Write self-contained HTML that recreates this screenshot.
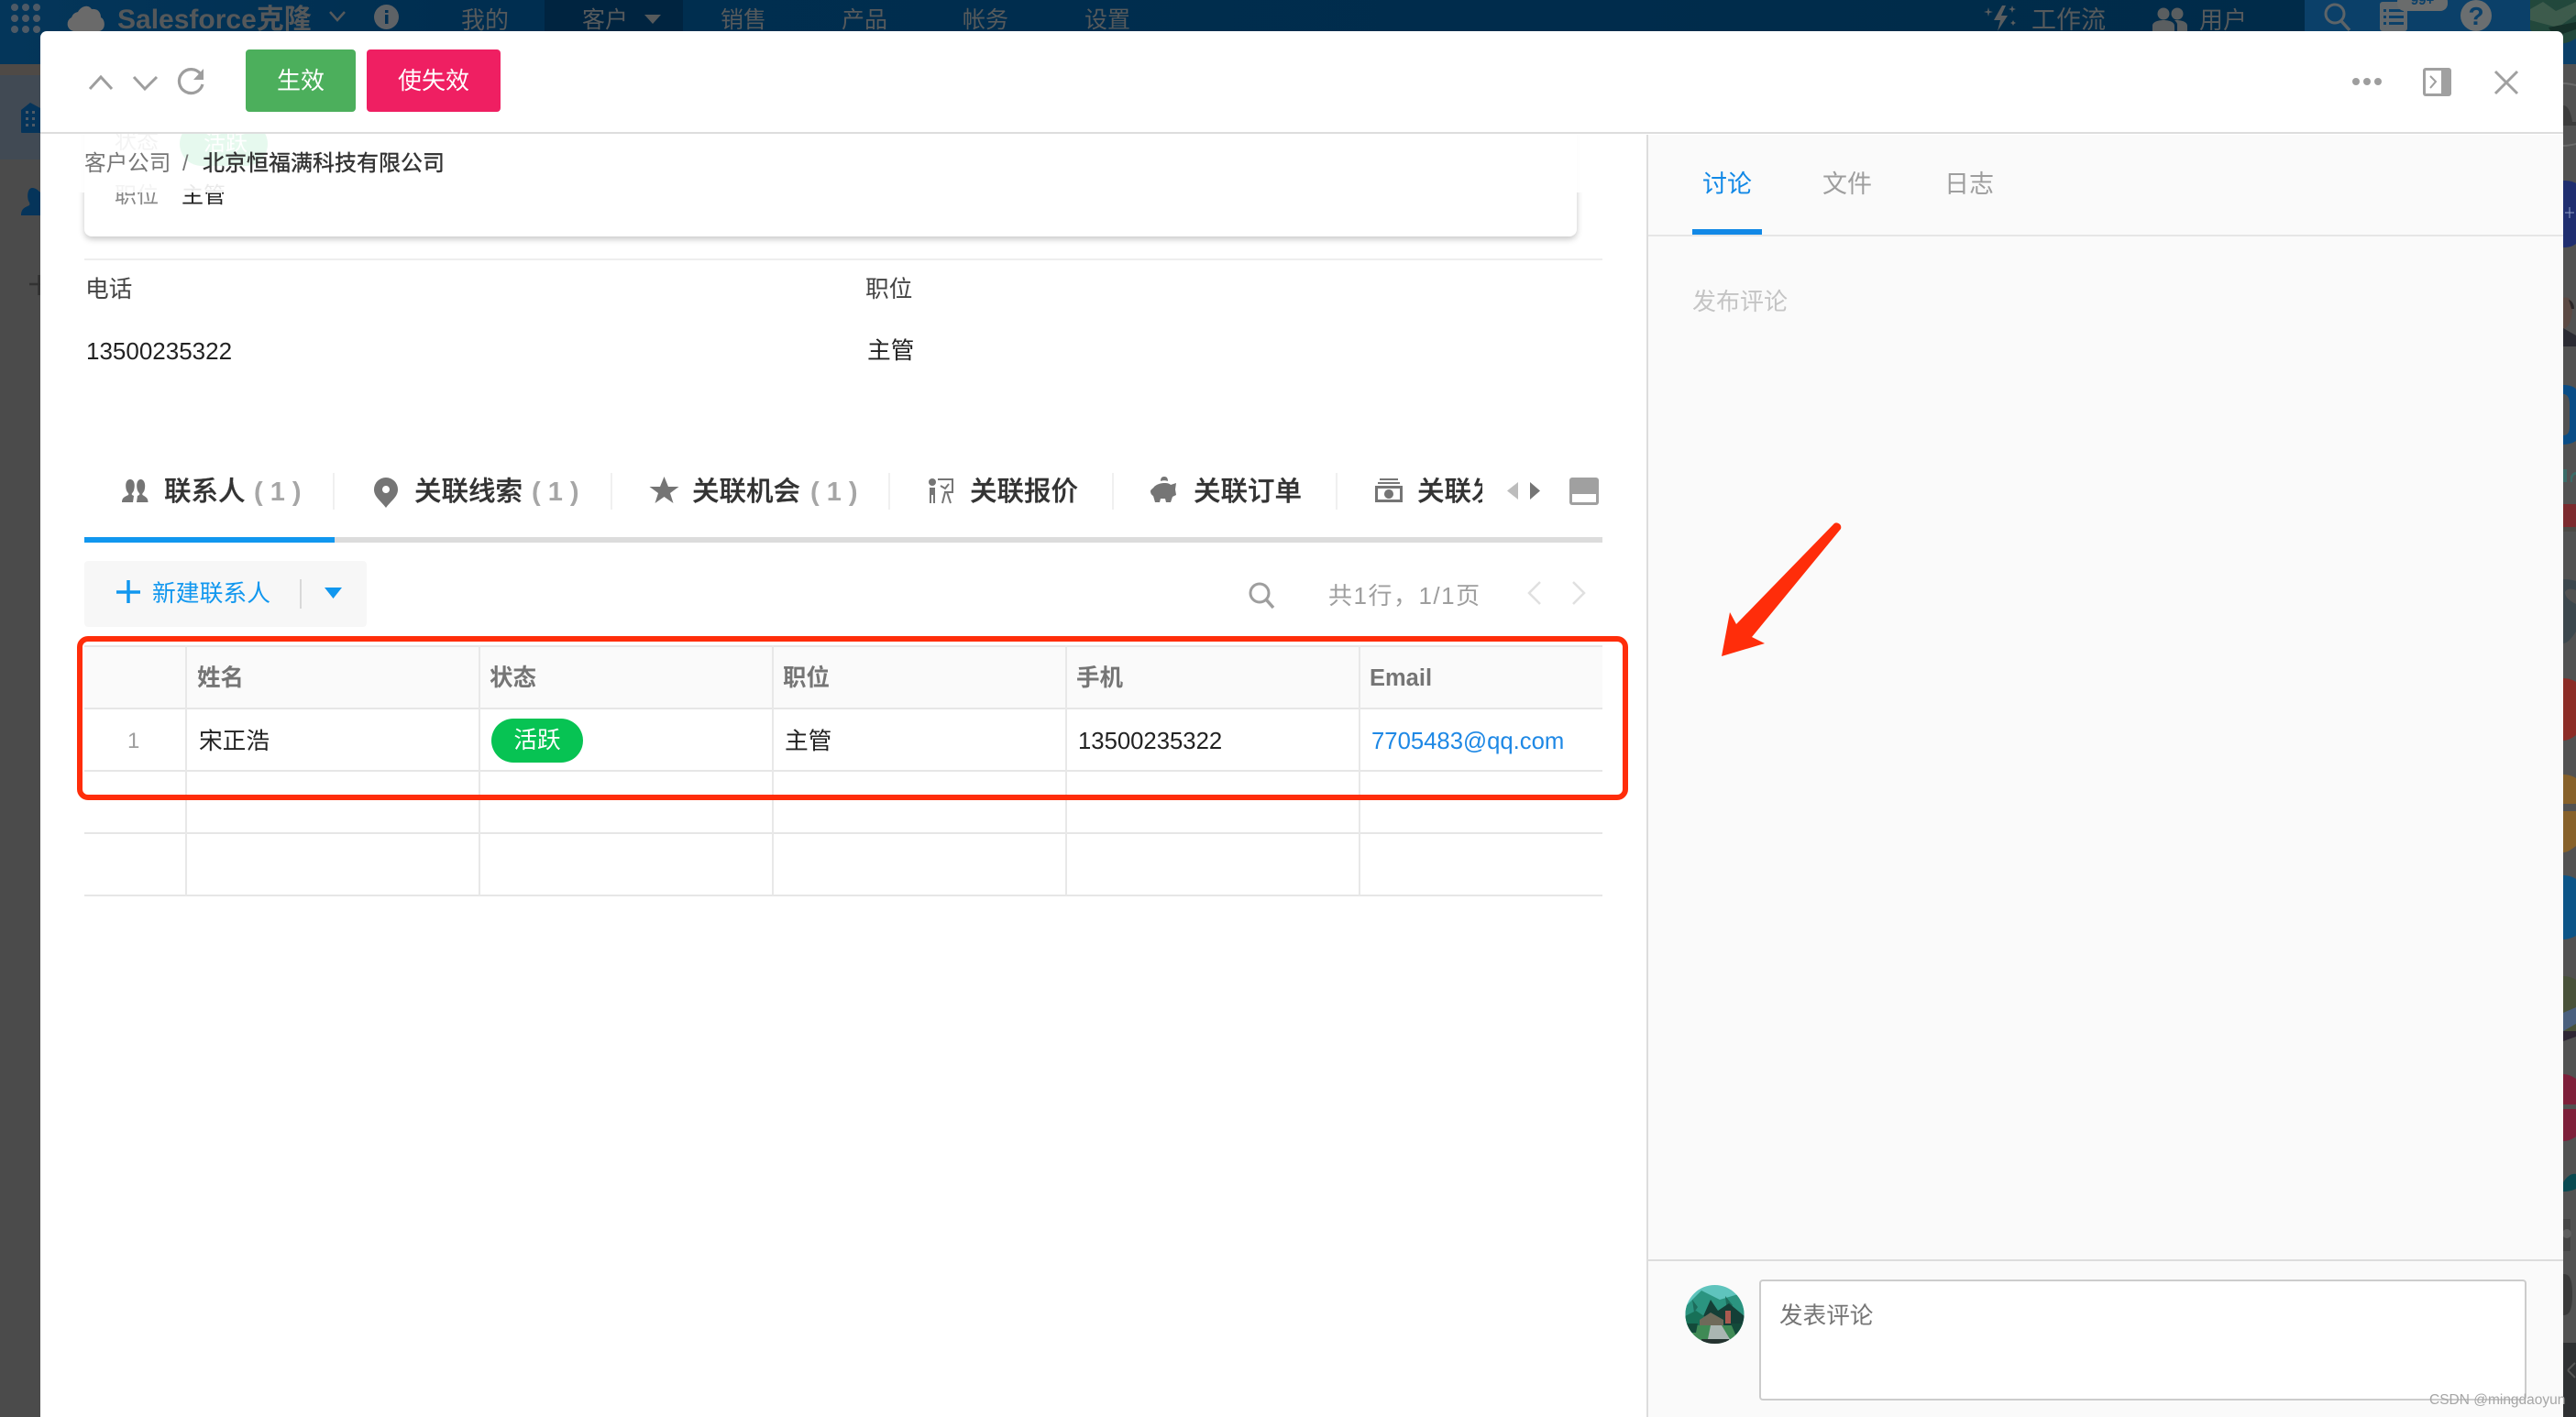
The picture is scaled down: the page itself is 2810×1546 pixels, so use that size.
<!DOCTYPE html>
<html lang="zh-CN"><head><meta charset="utf-8"><title>Salesforce克隆</title>
<style>
html,body{margin:0;padding:0;width:2810px;height:1546px;overflow:hidden;background:#4b4b4b}
body{position:relative;font-family:"Liberation Sans","Noto Sans CJK SC",sans-serif;color:#333}
.a{position:absolute}
.t{position:absolute;white-space:nowrap;line-height:40px;height:40px;transform:translateY(2px)}
svg{position:absolute;overflow:visible}
.nav{font-size:29px;color:#565a5c}
.tab{font-size:29.500px;font-weight:500;color:#333;-webkit-text-stroke:.3px #333}
.cnt{font-size:29px;color:#a6a6a6;font-weight:700}
.th{font-size:25.500px;font-weight:700;color:#757575}
.td{font-size:25.700px;color:#222}
.hl{position:absolute;left:92px;width:1656px;height:2px;background:#e6e6e6}
.vl{position:absolute;top:704px;width:2px;height:274px;background:#e8e8e8}
.sep{position:absolute;top:516px;width:2px;height:40px;background:#f0f0f0}
</style></head><body>

<!-- dimmed page background -->
<div class="a" style="left:0;top:0;width:2810px;height:70px;background:linear-gradient(90deg,#04365a 0,#002e50 500px,#002b49 2514px,#0b4069 2514px,#0b4069 2810px)"></div>
<div class="a" style="left:594px;top:0;width:151px;height:70px;background:#002440"></div>
<div class="a" style="left:0;top:70px;width:44px;height:12px;background:#4f4a46"></div>
<div class="a" style="left:0;top:82px;width:44px;height:92px;background:#414a54"></div>

<svg style="left:0;top:0" width="60" height="340" viewBox="0 0 60 340">
<g fill="#4e5a66"><circle cx="16" cy="8" r="4"/><circle cx="28" cy="8" r="4"/><circle cx="40" cy="8" r="4"/><circle cx="16" cy="20" r="4"/><circle cx="28" cy="20" r="4"/><circle cx="40" cy="20" r="4"/><circle cx="16" cy="32" r="4"/><circle cx="28" cy="32" r="4"/><circle cx="40" cy="32" r="4"/></g>
<path d="M24 145a1 1 0 0 1-1-1v-24l10-8 11 6v27z" fill="#05345a"/>
<g fill="#4e5a66"><rect x="28" y="121" width="3" height="3"/><rect x="35" y="121" width="3" height="3"/><rect x="28" y="128" width="3" height="3"/><rect x="35" y="128" width="3" height="3"/><rect x="28" y="135" width="3" height="3"/><rect x="35" y="135" width="3" height="3"/></g>
<path d="M23 235c0-8 5-9 9-11 1-2 0-3-1-5-2-7 0-14 4-14s7 3 9 5v25z" fill="#05345a"/>
<path d="M32 310h12M42.500 300v22" stroke="#333" stroke-width="2.500" fill="none"/>
</svg>

<svg style="left:72px;top:5px" width="44" height="30" viewBox="0 0 44 30"><path d="M8 29a8 8 0 0 1-2-15 9 9 0 0 1 7-6c3-6 11-9 15-3 7-1 10 4 10 9 5 2 6 14-2 15z" fill="#6a6a6a"/></svg>
<div class="t nav" style="left:128px;top:0;font-weight:700;font-size:30px;color:#55585a">Salesforce克隆</div>
<svg style="left:359px;top:11px" width="18" height="14" viewBox="0 0 18 14"><path d="M1 2l8 9 8-9" stroke="#565a5c" stroke-width="2.500" fill="none"/></svg>
<svg style="left:408px;top:5px" width="27" height="27" viewBox="0 0 27 27"><circle cx="13.500" cy="13.500" r="13.500" fill="#5e6266"/><rect x="12" y="11" width="3.500" height="10" fill="#013052"/><rect x="12" y="6" width="3.500" height="3" fill="#013052"/></svg>
<div class="t nav" style="left:503px;top:0;font-size:26px">我的</div>
<div class="t nav" style="left:635px;top:0;font-size:25px">客户</div>
<svg style="left:703px;top:16px" width="18" height="10" viewBox="0 0 18 10"><path d="M0 0h18l-9 10z" fill="#565a5c"/></svg>
<div class="t nav" style="left:786px;top:0;font-size:25px">销售</div>
<div class="t nav" style="left:918px;top:0;font-size:25px">产品</div>
<div class="t nav" style="left:1050px;top:0;font-size:25px">帐务</div>
<div class="t nav" style="left:1183px;top:0;font-size:25px">设置</div>

<svg style="left:2165px;top:4px" width="36" height="30" viewBox="0 0 36 30"><path d="M19 2L10 18h7l-3 12 11-17h-7l5-11z" fill="#5a5e60"/><path d="M4 4l1 4 4 1-4 1-1 4-1-4-4-1 4-1z M30 2l1 3 3 1-3 1-1 3-1-3-3-1 3-1z M31 18l1 2 2 1-2 1-1 2-1-2-2-1 2-1z" fill="#5a5e60"/></svg>
<div class="t nav" style="left:2216px;top:0;font-size:27px">工作流</div>
<svg style="left:2348px;top:8px" width="38" height="26" viewBox="0 0 38 26"><circle cx="12" cy="7" r="6.500" fill="#5a5e60"/><circle cx="27" cy="7" r="6.500" fill="#5a5e60"/><path d="M0 26v-6c0-4 6-6 12-6s12 2 12 6v6zM26 14c6 0 12 2 12 6v6H27v-7c0-2-1-3-3-5z" fill="#5a5e60"/></svg>
<div class="t nav" style="left:2399px;top:0;font-size:26px">用户</div>
<svg style="left:2534px;top:2px" width="32" height="32" viewBox="0 0 32 32"><circle cx="13" cy="13" r="10" stroke="#5d6468" stroke-width="3" fill="none"/><path d="M20 21l9 10" stroke="#5d6468" stroke-width="3.500"/></svg>
<svg style="left:2596px;top:2px" width="30" height="32" viewBox="0 0 30 32"><rect width="30" height="32" rx="3" fill="#62686c"/><g fill="#0b4069"><rect x="4" y="8" width="3" height="3"/><rect x="10" y="8" width="16" height="3"/><rect x="4" y="15" width="3" height="3"/><rect x="10" y="15" width="16" height="3"/><rect x="4" y="22" width="3" height="3"/><rect x="10" y="22" width="16" height="3"/></g></svg>
<div class="a" style="left:2615px;top:-6px;width:55px;height:18px;border-radius:8px;background:#6a6c6c;color:#0b4069;font-size:15px;text-align:center;line-height:14px;font-weight:700">99+</div>
<svg style="left:2684px;top:2px" width="34" height="32" viewBox="0 0 34 32"><circle cx="17" cy="15" r="17" fill="#6a6e70"/><text x="17" y="25" text-anchor="middle" font-family="Liberation Sans" font-weight="700" font-size="28" fill="#0b4069">?</text></svg>

<!-- right strip -->
<svg style="left:2760px;top:0" width="50" height="1546" viewBox="0 0 50 1546">
<rect x="36" y="70" width="14" height="1476" fill="#525252"/>
<defs><clipPath id="av"><circle cx="30" cy="12" r="36"/></clipPath></defs>
<g clip-path="url(#av)"><rect width="50" height="50" fill="#22483c"/><path d="M0 10l14-8 14 10 22-10v14L30 30 0 22z" fill="#3d5b4c"/><path d="M20 30l30-6v8l-24 8z" fill="#153029"/></g>
<rect x="36" y="50" width="14" height="20" fill="#0b4069"/>
<path d="M36 90c4 0 10 1 14 2v2c-5-1-10-2-14-2zM36 158c5 0 10-1 14-2v2c-5 1-10 2-14 2z" fill="#6a6a6a"/>
<path d="M36 115c6 0 9 10 10 18h4v4H36z" fill="#3c3c3c"/>
<path d="M36 197c6 0 11 1 14 3v66c-4 3-8 4-14 4z" fill="#1f2e70"/>
<path d="M38 232h10M43 226v12" stroke="#8f9fc4" stroke-width="1"/>
<path d="M36 325c6-2 10 2 10 10 0 10-2 22-10 24z" fill="#5c4a44"/><path d="M36 358l14 8v12H36z" fill="#2b2b33"/><path d="M42 327c3 1 6 4 6 10h-3c-1-4-2-7-3-10z" fill="#2a2628"/>
<path d="M36 420c8 0 14 3 14 5v56c-3 2-8 4-14 4v-10c5 0 7-3 7-10v-24c0-8-3-11-7-11z" fill="#0a4d86"/>
<path d="M36 512h4v14h-4zM44 520c2-4 4-5 6-5v3c-3 0-4 3-4 8h-2z" fill="#3a6c68"/>
<rect x="36" y="550" width="14" height="25" fill="#7c2a2e"/><rect x="36" y="575" width="14" height="5" fill="#4d4a46"/>
<path d="M36 632c6 0 11 1 14 2v10c-5-2-10-2-12 2 0 6 6 10 12 13v30c-5 8-10 13-14 13z" fill="#3c474d"/><path d="M36 660c6 4 10 8 14 9v12c-5 5-10 8-14 10z" fill="#3c474d"/>
<path d="M36 740c6 0 11 2 14 4v58c-4 3-9 6-14 6z" fill="#8c2c26"/>
<path d="M36 845c6 0 11 2 14 4v28H36zM36 885h14v38c-4 3-9 7-14 7z" fill="#87612a"/>
<path d="M36 955c6 0 11 2 14 4v62c-4 2-9 4-14 4z" fill="#0c5588"/>
<path d="M36 1065c6 0 11 2 14 4v60c-4 3-9 6-14 6z" fill="#49523a"/><path d="M36 1105l14-6v18l-14 8z" fill="#4a607e"/><path d="M36 1125h14v6l-14 5z" fill="#2e2634"/>
<path d="M36 1172c6 0 11 3 14 5v28H36zM36 1210h14v30c-4 3-9 5-14 5z" fill="#7e1f3a"/>
<path d="M36 1290c5-8 10-10 14-9v16c-4 2-9 3-14 3z" fill="#0a4a52"/>
<rect x="36" y="1330" width="8" height="35" fill="#454545"/><circle cx="40" cy="1346" r="5" fill="#5e5e5e"/>
<path d="M36 1390c6 0 10 3 10 22s-4 23-10 23z" fill="#3a3a3a"/>
<rect x="36" y="1465" width="14" height="81" fill="#2f3133"/>
<path d="M41 1495l8-8M41 1495l8 8" stroke="#555" stroke-width="2" fill="none"/>
</svg>

<!-- modal -->
<div class="a" style="left:44px;top:34px;width:2752px;height:1512px;background:#fff;border-radius:7px 7px 0 0;overflow:hidden"></div>
<div class="a" style="left:1796px;top:147px;width:1000px;height:1399px;background:#fafafa;border-left:2px solid #ddd;box-sizing:border-box"></div>

<!-- card scrolled behind breadcrumb (clipped at the header line) -->
<div class="a" style="left:80px;top:146px;width:1660px;height:130px;overflow:hidden">
  <div class="a" style="left:12px;top:-46px;width:1628px;height:158px;background:#fff;border-radius:8px;box-shadow:0 3px 7px rgba(0,0,0,.22)"></div>
  <div class="t" style="left:45px;top:-13px;font-size:24px;color:#888">状态</div>
  <div class="a" style="left:116px;top:-13px;width:96px;height:48px;border-radius:24px;background:#07c353"></div>
  <div class="t" style="left:142px;top:-11px;font-size:24px;color:#fff">活跃</div>
  <div class="t" style="left:45px;top:46px;font-size:24px;color:#888">职位</div>
  <div class="t" style="left:118px;top:46px;font-size:24px;color:#222">主管</div>
</div>
<div class="a" style="left:44px;top:146px;width:1752px;height:64px;background:rgba(255,255,255,.9)"></div>
<div class="a" style="left:44px;top:144px;width:2752px;height:2px;background:#ddd"></div>

<!-- header -->
<svg style="left:44px;top:34px" width="240" height="90" viewBox="44 34 240 90">
<path d="M98 97l12-13 12 13M146 84l12 13 13-13" stroke="#9e9e9e" stroke-width="3" fill="none"/>
<path d="M219 81a13 13 0 1 0 2 11" stroke="#9e9e9e" stroke-width="3.200" fill="none"/>
<path d="M222 75v12h-11z" fill="#9e9e9e"/>
</svg>
<div class="a" style="left:268px;top:54px;width:120px;height:68px;background:#4caf5c;border-radius:4px;color:#fff;font-size:26px;text-align:center;line-height:68px">生效</div>
<div class="a" style="left:400px;top:54px;width:146px;height:68px;background:#ef1f62;border-radius:4px;color:#fff;font-size:26px;text-align:center;line-height:68px">使失效</div>

<svg style="left:2560px;top:70px" width="200" height="40" viewBox="2560 70 200 40">
<circle cx="2570" cy="89" r="4" fill="#9e9e9e"/><circle cx="2582" cy="89" r="4" fill="#9e9e9e"/><circle cx="2594" cy="89" r="4" fill="#9e9e9e"/>
<rect x="2643" y="74" width="31" height="31" rx="3" fill="#a0a0a0"/><rect x="2646" y="77" width="17" height="25" fill="#fff"/><path d="M2651 83l6 6-6 7" stroke="#9e9e9e" stroke-width="2" fill="none"/>
<path d="M2722 78l24 24M2746 78l-24 24" stroke="#a0a0a0" stroke-width="3" fill="none"/>
</svg>

<!-- breadcrumb -->
<div class="t" style="left:92px;top:157px;font-size:23.600px;color:#757575">客户公司</div>
<div class="t" style="left:199px;top:157px;font-size:23.600px;color:#757575">/</div>
<div class="t" style="left:221px;top:157px;font-size:24px;color:#333;-webkit-text-stroke:.4px #333">北京恒福满科技有限公司</div>

<div class="a" style="left:92px;top:282px;width:1656px;height:2px;background:#eee"></div>
<div class="t td" style="left:93px;top:294px;color:#444">电话</div>
<div class="t td" style="left:944px;top:294px;color:#444">职位</div>
<div class="t td" style="left:94px;top:361px;font-size:26px">13500235322</div>
<div class="t td" style="left:946px;top:361px">主管</div>

<!-- related tabs -->
<svg style="left:130px;top:516px" width="1620" height="40" viewBox="130 516 1620 40">
<g fill="#757575">
<path d="M133 548c0-5 3-6 7-8 1-2-1-2-2-5-2-7 0-12 4-12s6 5 4 12c-1 3-3 3-2 5l2 1-1 7z"/>
<path d="M149 548l1-7 2-1c1-2-1-2-2-5-2-7 0-12 3.500-12s6 5 4 12c-1 3-3 3-2 5 3 2 6 3 6 8z"/>
<path fill-rule="evenodd" d="M421 521a13 13 0 0 1 13 13c0 8-7 12-13 20-6-8-13-12-13-20a13 13 0 0 1 13-13zm0 9a4 4 0 1 0 .01 0z"/>
<path d="M724.500 520l4.500 11h11.500l-9.500 7 3.500 11-10-7-10 7 3.500-11-9.500-7H720z"/>
<circle cx="1017" cy="526" r="4"/><rect x="1014" y="532" width="6" height="8"/><path d="M1014 540h2v9h-2zM1018 540h2v9h-2z"/>
<path d="M1023 523h16v14h-9M1031 537l-3 12M1033 537l4 12M1026 530l5 3 4-5" fill="none" stroke="#757575" stroke-width="2"/>
<path d="M1270 520c-3 0-4 2-4 5 2-1 6-1 8 0 0-3-1-5-4-5z"/><path d="M1255 536c0-2 3-3 4-5 5-5 16-5 18-2l6-2-1 7 1 6-4 2-2 6h-5l-1-4h-5l-1 4h-5l-2-7c-2-1-3-3-3-5z"/>
<path d="M1505 522h20v2h-20zM1503 526h24v2h-24z"/><path fill-rule="evenodd" d="M1500 530h30v18h-30zm3 3v12h24v-12zm12 1a5 5 0 1 1-.01 0z"/>
<path d="M1656 526v19l-12-9.500z" fill="#bdbdbd"/><path d="M1669 526v19l11-9.500z"/>
</g>
<rect x="1712" y="521" width="32" height="30" rx="3" fill="#a0a0a0"/><rect x="1715" y="539" width="26" height="9" fill="#fff"/>
</svg>
<div class="t tab" style="left:179px;top:515px">联系人</div><div class="t cnt" style="left:277px;top:515px">( 1 )</div>
<div class="sep" style="left:363px"></div>
<div class="t tab" style="left:452px;top:515px">关联线索</div><div class="t cnt" style="left:580px;top:515px">( 1 )</div>
<div class="sep" style="left:666px"></div>
<div class="t tab" style="left:755px;top:515px">关联机会</div><div class="t cnt" style="left:884px;top:515px">( 1 )</div>
<div class="sep" style="left:969px"></div>
<div class="t tab" style="left:1058px;top:515px">关联报价</div>
<div class="sep" style="left:1213px"></div>
<div class="t tab" style="left:1302px;top:515px">关联订单</div>
<div class="sep" style="left:1457px"></div>
<div class="a" style="left:1546px;top:515px;width:71px;height:44px;overflow:hidden"><div class="t tab" style="left:0;top:0">关联发货</div></div>

<div class="a" style="left:92px;top:586px;width:1656px;height:6px;background:#dcdcdc"></div>
<div class="a" style="left:92px;top:586px;width:273px;height:6px;background:#1197ef"></div>

<!-- toolbar -->
<div class="a" style="left:92px;top:612px;width:308px;height:72px;background:#f7f7f7;border-radius:4px"></div>
<svg style="left:120px;top:625px" width="260" height="45" viewBox="120 625 260 45">
<path d="M127 646h26M140 633v25" stroke="#1197ef" stroke-width="3.500" fill="none"/>
<rect x="327" y="632" width="2" height="32" fill="#d8d8d8"/>
<path d="M354 641h19l-9.500 12z" fill="#1197ef"/>
</svg>
<div class="t" style="left:166px;top:626px;font-size:25.800px;color:#1197ef">新建联系人</div>
<svg style="left:1360px;top:630px" width="380" height="36" viewBox="1360 630 380 36">
<circle cx="1374" cy="647" r="10" stroke="#9e9e9e" stroke-width="3" fill="none"/><path d="M1381 654l8 9" stroke="#9e9e9e" stroke-width="3.500"/>
<path d="M1680 635l-12 12 12 12M1716 635l12 12-12 12" stroke="#e0e0e0" stroke-width="2.500" fill="none"/>
</svg>
<div class="t" style="left:1449px;top:628px;font-size:26px;letter-spacing:1.500px;color:#9e9e9e">共1行，1/1页</div>

<!-- table -->
<div class="a" style="left:92px;top:706px;width:1656px;height:66px;background:#fafafa"></div>
<div class="hl" style="top:704px"></div><div class="hl" style="top:772px"></div><div class="hl" style="top:840px"></div><div class="hl" style="top:908px"></div><div class="hl" style="top:976px"></div>
<div class="vl" style="left:202px"></div><div class="vl" style="left:522px"></div><div class="vl" style="left:842px"></div><div class="vl" style="left:1162px"></div><div class="vl" style="left:1482px"></div>
<div class="t th" style="left:215px;top:718px">姓名</div>
<div class="t th" style="left:534px;top:718px">状态</div>
<div class="t th" style="left:854px;top:718px">职位</div>
<div class="t th" style="left:1174px;top:718px">手机</div>
<div class="t th" style="left:1494px;top:718px">Email</div>
<div class="t td" style="left:139px;top:787px;color:#9e9e9e;font-size:24px">1</div>
<div class="t td" style="left:217px;top:787px">宋正浩</div>
<div class="a" style="left:536px;top:784px;width:100px;height:48px;border-radius:24px;background:#07c353;color:#fff;font-size:25.600px;line-height:48px;text-align:center">活跃</div>
<div class="t td" style="left:856px;top:787px">主管</div>
<div class="t td" style="left:1176px;top:787px">13500235322</div>
<div class="t td" style="left:1496px;top:787px;color:#1e88e5">7705483@qq.com</div>

<!-- right panel -->
<div class="a" style="left:1798px;top:256px;width:998px;height:2px;background:#e6e6e6"></div>
<div class="a" style="left:1846px;top:250px;width:76px;height:6px;background:#1188e6"></div>
<div class="t" style="left:1857px;top:179px;font-size:27px;color:#1188e6">讨论</div>
<div class="t" style="left:1988px;top:179px;font-size:27px;color:#9e9e9e">文件</div>
<div class="t" style="left:2121px;top:179px;font-size:27px;color:#9e9e9e">日志</div>
<div class="t" style="left:1846px;top:307px;font-size:26px;color:#c4c4c4">发布评论</div>
<div class="a" style="left:1798px;top:1374px;width:998px;height:2px;background:#ddd"></div>
<svg style="left:1838px;top:1402px" width="65" height="64" viewBox="0 0 65 64">
<defs><clipPath id="c"><circle cx="32.500" cy="32" r="32"/></clipPath></defs>
<g clip-path="url(#c)">
<rect width="65" height="64" fill="#5fc4bd"/>
<path d="M0 24L18 6l20 10 27-8v36H0z" fill="#2b9480"/>
<path d="M8 16l6 8-4 6zM44 12l8 10-6 8z" fill="#1d6d5c"/>
<path d="M20 34l8-18 8 12 12-8 17 14v16H20z" fill="#143f37"/>
<path d="M0 34l12-6 12 8v12H0z" fill="#177057"/>
<path d="M16 38l12-8 14 8v6H16z" fill="#6f6a5a"/>
<rect x="44" y="28" width="6" height="14" fill="#a95a50"/>
<rect y="44" width="65" height="20" fill="#3f8a55"/>
<path d="M24 64l4-20h12l12 20z" fill="#aab6b2"/>
<path d="M0 42h14l-2 10H0zM50 42h15v14H56z" fill="#134a3a"/>
<path d="M18 59h30v5H18z" fill="#24322f"/>
</g></svg>
<div class="a" style="left:1919px;top:1396px;width:837px;height:132px;box-sizing:border-box;background:#fff;border:2px solid #ccc;border-radius:4px"></div>
<div class="t" style="left:1941px;top:1414px;font-size:25.600px;color:#757575">发表评论</div>
<div class="t" style="left:2650px;top:1506px;font-size:15.500px;color:#a6a6a6">CSDN @mingdaoyun</div>

<!-- annotations -->
<div class="a" style="left:84px;top:694px;width:1692px;height:179px;box-sizing:border-box;border:6px solid #ff2d0a;border-radius:12px"></div>
<svg style="left:1870px;top:560px" width="145" height="165" viewBox="1870 560 145 165">
<path d="M2001 571a5 5 0 0 1 7 6L1911 695l14 7-47 14 9-48 7 13z" fill="#ff2d0a"/>
</svg>
</body></html>
